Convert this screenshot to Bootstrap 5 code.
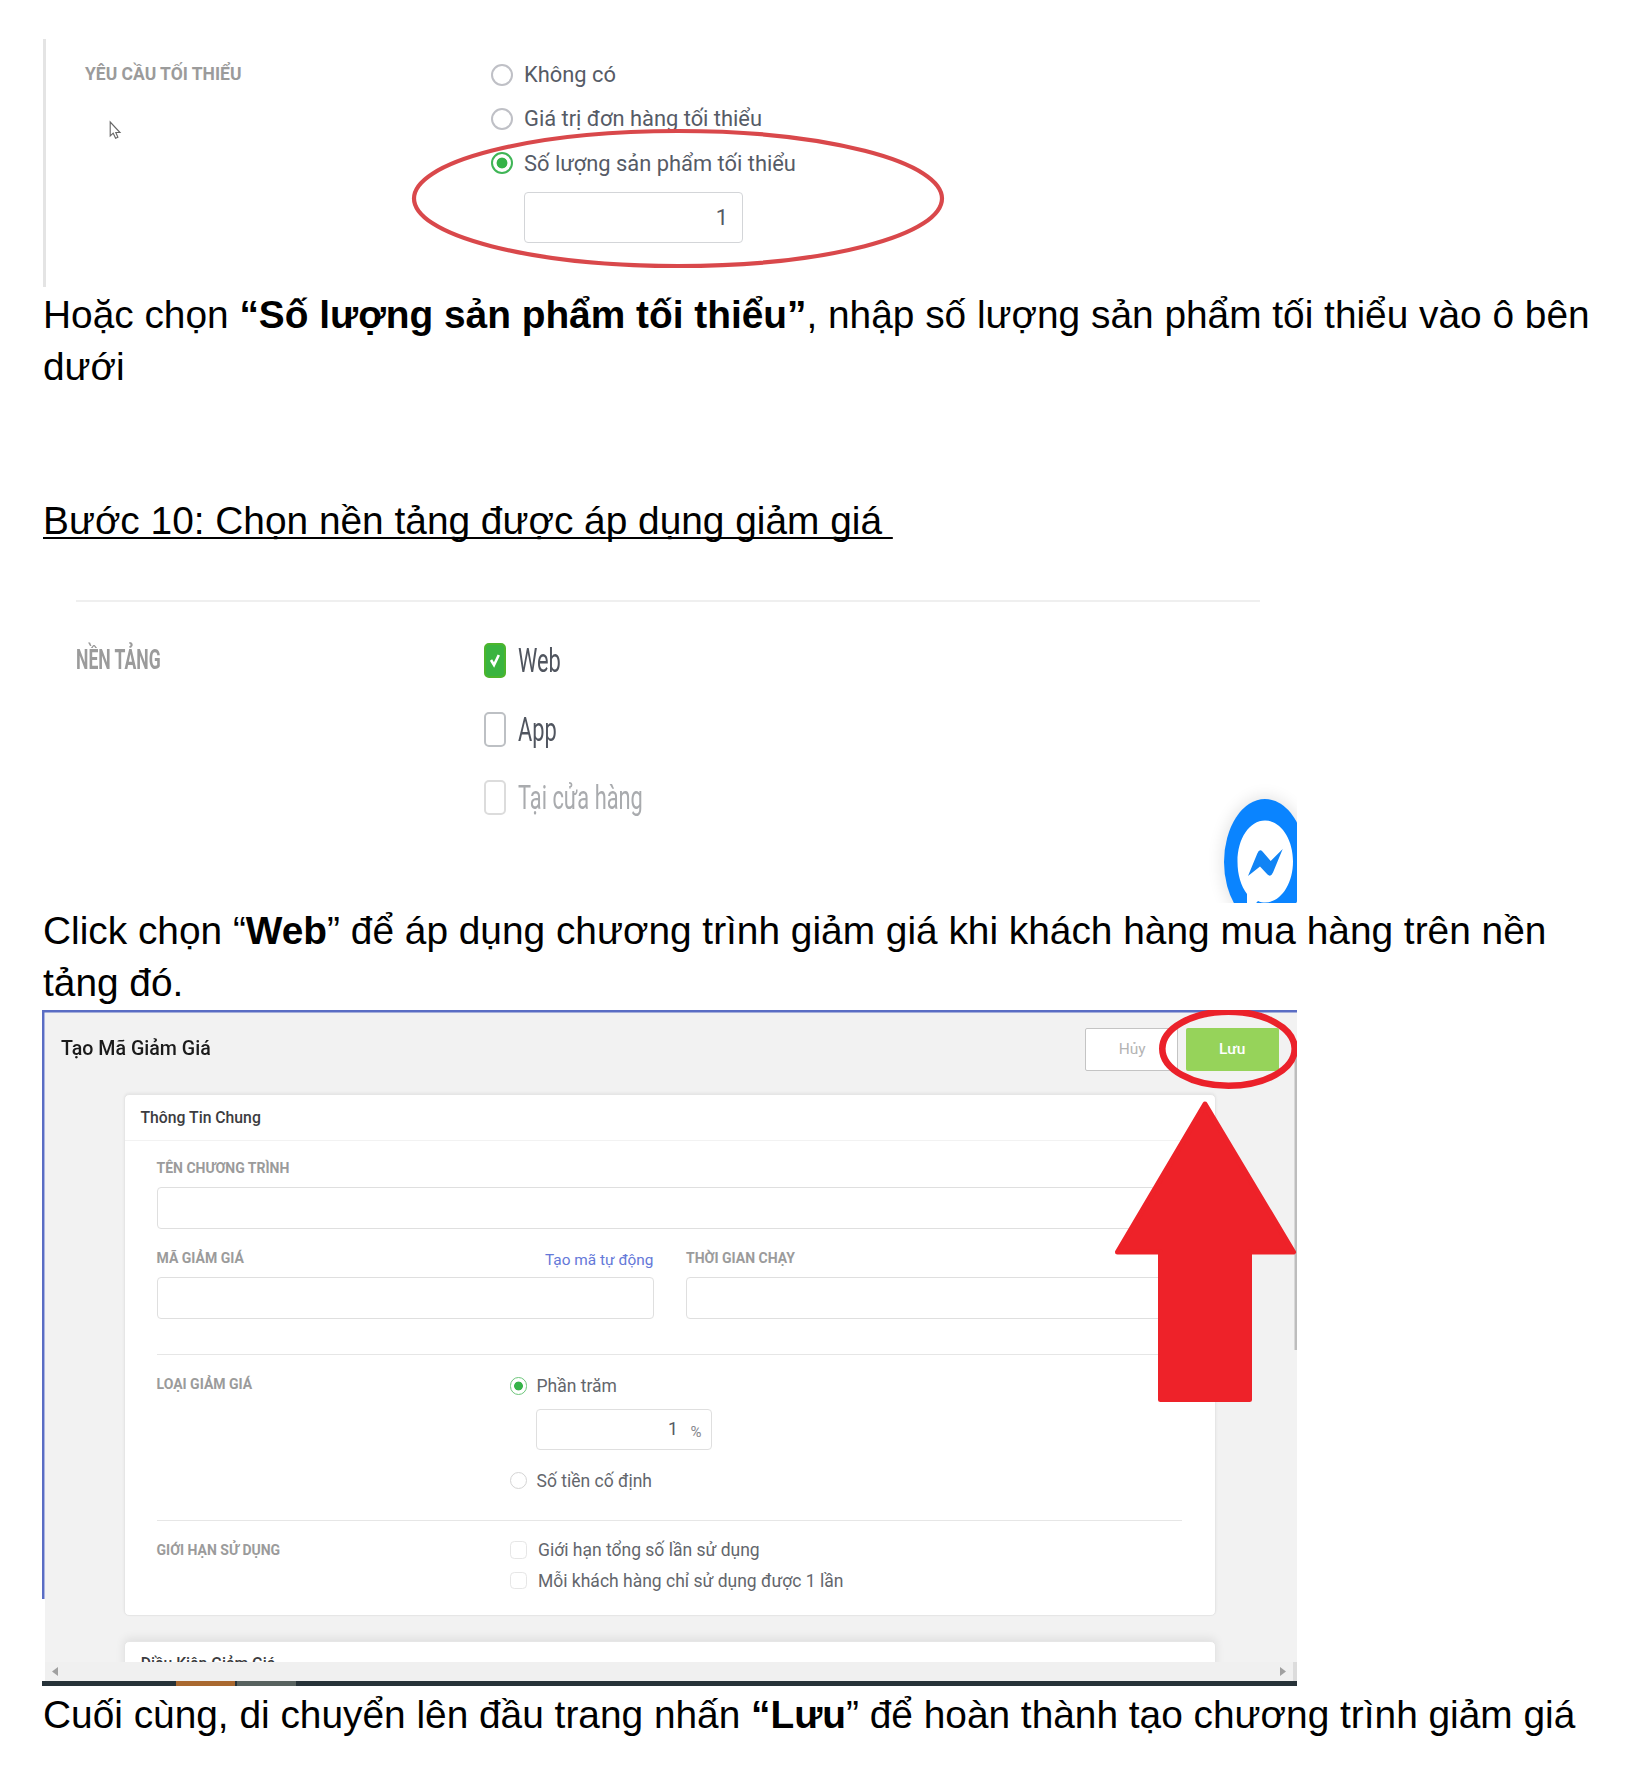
<!DOCTYPE html>
<html lang="vi">
<head>
<meta charset="utf-8">
<title>Tạo mã giảm giá</title>
<link href="https://cdn.jsdelivr.net/npm/bootstrap@5.3.0/dist/css/bootstrap.min.css" rel="stylesheet">
<script src="https://cdn.jsdelivr.net/npm/bootstrap@5.3.0/dist/js/bootstrap.bundle.min.js"></script>
<style>
body{font-family:"Liberation Sans",Arial,sans-serif;color:#000;background:#fff;width:1650px;height:1777px;overflow:hidden}
.doc{padding:39px 0 0 43px}
.doc p,.doc h2{font-size:38.84px;line-height:52px;font-weight:400;margin:0;white-space:nowrap}
.doc h2{margin-top:102px;text-decoration:underline;text-decoration-skip-ink:none;text-decoration-thickness:2px;text-underline-offset:3px;white-space:pre}
.fig{position:relative;font-family:Roboto,sans-serif}
.t{display:inline-block;transform-origin:0 50%;white-space:nowrap}
.over{position:absolute;left:0;top:0;pointer-events:none}
.form-check-input{margin:0;flex:none;background-image:none!important;border:2px solid #bfc0c6;box-shadow:none}
.form-check-input[type=radio]:checked{background:radial-gradient(circle,#35b348 0 5px,#fff 5.8px)!important;border-color:#3fb556}
.form-control{border-radius:4px;padding:0 17px;text-align:right;color:#555a64;background:#fff}
.cap{color:#9b9b9b;font-weight:700}

.fig-min{height:250px}
.rule-l{width:2.5px;height:248px;background:#e4e4e4}
.fig-min .cap{font-size:17.5px;line-height:20px;padding:25px 0 0 39.5px;width:445.5px}
.fig-min .opts{padding-top:14px}
.fig-min .opt{height:44.2px;font-size:21.88px;color:#565b66;gap:11px}
.fig-min .opt .t{padding-top:1px}
.fig-min .form-check-input{width:22px;height:22px}
.fig-min .form-control{width:219px;height:51.5px;padding-right:14px;margin:6px 0 0 33px;border:1.5px solid #d3d5d8;font-size:21.88px}

.fig-plat{height:356px;width:1254px;margin-bottom:2px;overflow:hidden}
.fig-plat .sep{margin:53px 0 0 33px;width:1184px;height:1.5px;background:#efefef}
.fig-plat .cap{font-size:27px;line-height:40px;margin:38px 0 0 33px;width:408px}
.fig-plat .cap .t{transform:scaleX(.65)}
.fig-plat .opts{padding-top:25px}
.fig-plat .opt{height:68.5px;font-size:34px;color:#50555f;gap:12px}
.fig-plat .opt .t{transform:scaleX(.642)}
.tall{width:22px;height:35px;border:2px solid #bdc0c4;border-radius:5px}
.tall.on{background:#3ab43f;border-color:#4db52c}
.tall svg{display:block}
.off .tall{border-color:#dcdcdc}.fig-plat .off{color:#a9abae}

.fig-form{margin:1px 0 3px -1px;width:1255px;height:676px;overflow:hidden}
.view{height:652px;background:#f2f2f2;margin-left:3px;padding-left:78.5px;overflow:hidden}
.bar-top{margin-left:-62.5px;width:1217.7px;padding-top:18px;height:61px}
.bar-top .ttl{font-size:19.3px;font-weight:500;color:#1b1b1b}
.ttl .t{transform:scaleX(1.018)}
.bar-top .btn{width:93px;height:43px;border-radius:2px;font-size:15.5px;font-weight:500;padding:0}
.bar-top .btn-no{border:1.7px solid #c4c4c4;background:#fff;color:#b4b4b4;font-weight:400;padding-left:2px}
.btn-ok,.btn-ok:hover{background:#96d35a;color:#fff}
.panel{width:1092px;background:#fff;border:1px solid #e6e6e6;border-radius:5px;box-shadow:0 -1px 3px rgba(0,0,0,.06)}
.p1{height:522px;margin-top:23px}.p2{margin-top:24.5px;height:60px;box-shadow:0 -3px 10px rgba(0,0,0,.08)}
.phead{height:46px;padding-left:16px;font-size:15.75px;font-weight:500;color:#3c3c40;border-bottom:1.5px solid #f2f2f2}
.pbody{padding-left:32px;width:1057.500px}
.pbody .cap{font-size:14px;line-height:18px}
.pbody .form-control{border:1px solid #dfdfdf;height:42px;font-size:17.6px}
.r1{padding-top:17.5px}.r1 .form-control{margin-top:10.5px}
.r2{padding-top:20px;gap:32.5px;height:125px}.r2 .form-control{margin-top:9.500px}
.col-code{width:497px}
.auto{color:#6478d8;font-size:15.4px;line-height:18px;padding-top:1.500px;margin-bottom:-1.500px;text-decoration:none}
.r3{border-top:1px solid #e6e6e6;height:166px}.r4{border-top:1px solid #e6e6e6;height:90px}
.r3 .cap,.r4 .cap{width:353px;padding-top:20px}
.r3 .opts{padding-top:16px}.r4 .opts{padding-top:13.500px}
.r3 .opt,.r4 .opt{font-size:17.5px;color:#63666c;height:30px;gap:9.5px}
.r3 .form-check-input,.r4 .form-check-input{width:17.5px;height:17.5px;border:1px solid #d4d4d4}
.r3 .form-check-input:checked{background:radial-gradient(circle,#35b348 0 4px,#fff 4.8px)!important;border-color:#6cc67a}
.r4 .form-check-input{border-color:#e6e6e6}
.r4 .opt{height:30.5px;gap:11px}
.r4 .opt .t,.r3 .opt .t{padding-top:1px}
.pct{width:176px;margin:7.7px 0 15.5px 26.5px}
.pct .form-control{height:41.5px;padding-right:33px}
.pct .sg{position:absolute;right:10.500px;top:12px;font-size:15px;line-height:22px;color:#85878c}
.hbar{height:19px;margin-left:3px;background:#f0f0f0;padding:0 11px 0 7px}
.task{height:5px;background:#263238}
.task i{display:block;height:5px;width:59px}
.task .tk1{margin-left:134px;background:#a9682f}.task .tk2{margin-left:2px;background:#58625f}
</style>
</head>
<body>
<main class="doc">
  <section class="fig fig-min d-flex">
    <div class="rule-l"></div>
    <div class="cap"><span class="t">YÊU CẦU TỐI THIỂU</span></div>
    <div class="opts">
      <label class="opt d-flex align-items-center"><input class="form-check-input" type="radio" name="m"><span class="t">Không có</span></label>
      <label class="opt d-flex align-items-center"><input class="form-check-input" type="radio" name="m"><span class="t">Giá trị đơn hàng tối thiểu</span></label>
      <label class="opt d-flex align-items-center"><input class="form-check-input" type="radio" name="m" checked><span class="t">Số lượng sản phẩm tối thiểu</span></label>
      <input class="form-control" value="1">
    </div>
    <svg class="over" width="920" height="250"><ellipse cx="635" cy="159.500" rx="264" ry="67.500" fill="none" stroke="#d9484b" stroke-width="4.200"/>
      <path d="M67.200 83v14l3-2.800 2.400 5 2.300-1-2.100-4.700h4.200z" fill="#fff" stroke="#666" stroke-width="1.100"/></svg>
  </section>
  <p>Hoặc chọn <b>“Số lượng sản phẩm tối thiểu”</b>, nhập số lượng sản phẩm tối thiểu vào ô bên</p>
  <p>dưới</p>

  <h2>Bước 10: Chọn nền tảng được áp dụng giảm giá </h2>
  <section class="fig fig-plat">
    <div class="sep"></div>
    <div class="d-flex">
      <div class="cap"><span class="t">NỀN TẢNG</span></div>
      <div class="opts">
        <div class="opt d-flex align-items-center"><span class="tall on"><svg width="18" height="31" viewBox="0 0 18 31"><path d="M5 15l3 5 4.800-10" fill="none" stroke="#fff" stroke-width="2.600"/></svg></span><span class="t">Web</span></div>
        <div class="opt d-flex align-items-center"><span class="tall"></span><span class="t">App</span></div>
        <div class="opt off d-flex align-items-center"><span class="tall"></span><span class="t">Tại cửa hàng</span></div>
      </div>
    </div>
    <svg class="over" width="1254" height="356">
      <defs><filter id="sh" x="-30%" y="-30%" width="160%" height="160%"><feGaussianBlur stdDeviation="8"/></filter></defs>
      <ellipse cx="1222" cy="315" rx="43" ry="65" fill="#000" opacity=".11" filter="url(#sh)"/>
      <ellipse cx="1222" cy="315" rx="41" ry="63" fill="#0a84ff"/>
      <path d="M1222 273.500c15.500 0 28 18 28 41s-12.500 41-28 41c-2 0-5-.5-7-1.500L1204 366v-19c-6-8-9.500-19-9.500-32.500 0-23 12-41 27.500-41z" fill="#fff"/>
      <path d="M1205 329l9.300-22.500q2.200-5.500 5.200-2l8.200 9.500 12-12-9.700 23.500q-2.300 5-5.500 2l-7.500-8z" fill="#1184f5"/>
    </svg>
  </section>
  <p>Click chọn “<b>Web</b>” để áp dụng chương trình giảm giá khi khách hàng mua hàng trên nền</p>
  <p>tảng đó.</p>

  <section class="fig fig-form">
    <div class="view">
      <div class="bar-top d-flex align-items-center">
        <div class="ttl me-auto"><span class="t">Tạo Mã Giảm Giá</span></div>
        <button class="btn btn-no me-2">Hủy</button><button class="btn btn-ok">Lưu</button>
      </div>
      <div class="panel p1">
        <div class="phead d-flex align-items-center"><span class="t">Thông Tin Chung</span></div>
        <div class="pbody">
          <div class="r1"><div class="cap">TÊN CHƯƠNG TRÌNH</div><input class="form-control"></div>
          <div class="r2 d-flex">
            <div class="col-code"><div class="d-flex justify-content-between"><div class="cap">MÃ GIẢM GIÁ</div><a class="auto">Tạo mã tự động</a></div><input class="form-control"></div>
            <div class="flex-fill"><div class="cap">THỜI GIAN CHẠY</div><input class="form-control"></div>
          </div>
          <div class="r3 d-flex">
            <div class="cap">LOẠI GIẢM GIÁ</div>
            <div class="opts">
              <label class="opt d-flex align-items-center"><input class="form-check-input" type="radio" name="k" checked><span class="t">Phần trăm</span></label>
              <div class="pct position-relative"><input class="form-control" value="1"><span class="sg">%</span></div>
              <label class="opt d-flex align-items-center"><input class="form-check-input" type="radio" name="k"><span class="t">Số tiền cố định</span></label>
            </div>
          </div>
          <div class="r4 d-flex">
            <div class="cap">GIỚI HẠN SỬ DỤNG</div>
            <div class="opts">
              <label class="opt d-flex align-items-center"><input class="form-check-input" type="checkbox"><span class="t">Giới hạn tổng số lần sử dụng</span></label>
              <label class="opt d-flex align-items-center"><input class="form-check-input" type="checkbox"><span class="t">Mỗi khách hàng chỉ sử dụng được 1 lần</span></label>
            </div>
          </div>
        </div>
      </div>
      <div class="panel p2"><div class="phead d-flex align-items-center"><span class="t">Điều Kiện Giảm Giá</span></div></div>
    </div>
    <div class="hbar d-flex align-items-center justify-content-between">
      <svg width="6" height="9"><path d="M6 0v9L0 4.500z" fill="#a0a0a0"/></svg><svg width="6" height="9"><path d="M0 0v9l6-4.500z" fill="#a0a0a0"/></svg>
    </div>
    <div class="task d-flex"><i class="tk1"></i><i class="tk2"></i></div>
    <svg class="over" width="1255" height="676">
      <path d="M0 0H1255V2.500H2.500V589H0z" fill="#5a6dc4"/>
      <rect x="1252.500" y="40" width="2.500" height="300" fill="#bdbdbd"/>
      <rect x="1251" y="652" width="4" height="19" fill="#dcdcdc"/>
      <ellipse cx="1186.500" cy="38.700" rx="66.200" ry="37" fill="none" stroke="#eb212a" stroke-width="6.600"/>
      <path d="M1163 94L1251.500 242H1207.500V389.500H1118.500V242H1075.500z" fill="#ee2229" stroke="#ee2229" stroke-width="5" stroke-linejoin="round"/>
    </svg>
  </section>
  <p>Cuối cùng, di chuyển lên đầu trang nhấn <b>“Lưu</b>” để hoàn thành tạo chương trình giảm giá</p>
</main>
</body>
</html>
